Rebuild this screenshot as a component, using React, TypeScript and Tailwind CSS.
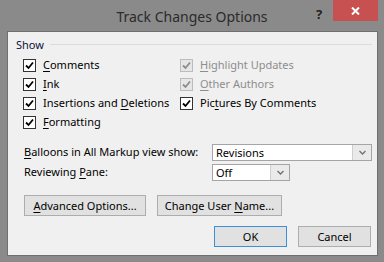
import React from "react";

const font = { fontFamily: '"Noto Sans", "Open Sans", sans-serif' };

function Check({ disabled }: { disabled?: boolean }) {
  return (
    <span
      className={`w-[13px] h-[13px] shrink-0 border flex items-center justify-center ${
        disabled ? "border-[#bcbcbc] bg-[#e6e6e6]" : "border-[#333333] bg-white"
      }`}
    >
      <svg width="9" height="9" viewBox="0 0 9 9">
        <path
          d="M1 4.5 L3.5 7 L8 1.5"
          fill="none"
          stroke={disabled ? "#8c8c8c" : "#000"}
          strokeWidth="1.8"
        />
      </svg>
    </span>
  );
}

// ラベルのアクセスキー部分に下線を引く
function Label({ pre, key_, post, disabled }: { pre?: string; key_: string; post?: string; disabled?: boolean }) {
  return (
    <span className={`whitespace-nowrap ${disabled ? "text-[#8d8d8d]" : "text-black"}`}>
      {pre}
      <u className="underline-offset-2">{key_}</u>
      {post}
    </span>
  );
}

function CheckRow({ children, disabled }: { children: React.ReactNode; disabled?: boolean }) {
  return (
    <div className="h-[19px] flex items-center gap-[7px]">
      <Check disabled={disabled} />
      {children}
    </div>
  );
}

function Select({ value, width }: { value: string; width: string }) {
  return (
    <div className={`${width} h-[17px] border border-[#a5a5a5] bg-white flex`}>
      <div className="flex-1 pl-[3px] leading-[15px] text-black">{value}</div>
      <div className="w-[19px] h-full border-l border-[#cfcfcf] bg-[#eaeaea] flex items-center justify-center">
        <svg width="7" height="5" viewBox="0 0 7 5">
          <path d="M0.5 1 L3.5 4 L6.5 1" fill="none" stroke="#707070" strokeWidth="1.3" />
        </svg>
      </div>
    </div>
  );
}

function Btn({ children, width, focused }: { children: React.ReactNode; width: string; focused?: boolean }) {
  return (
    <button
      className={`${width} h-[21px] border bg-[#e1e1e1] text-black flex items-center justify-center leading-none ${
        focused ? "border-[#3c8fd9]" : "border-[#adadad]"
      }`}
    >
      {children}
    </button>
  );
}

export default function App() {
  return (
    <div className="w-[384px] h-[262px] bg-[#8a8a8a] flex flex-col text-[11px]" style={font}>
      {/* タイトルバー */}
      <div className="h-[31px] relative flex items-center justify-center">
        <span className="text-[14px] text-[#2b2b2b] mt-[1px]">Track Changes Options</span>
        <span className="absolute left-[316px] top-[5px] text-[13px] font-bold text-[#222]">?</span>
        <div className="absolute left-[333px] top-0 w-[45px] h-[21px] bg-[#c75050] flex items-center justify-center">
          <svg width="9" height="8" viewBox="0 0 9 8">
            <path d="M1 0.5 L8 7.5 M8 0.5 L1 7.5" stroke="#fff" strokeWidth="2" />
          </svg>
        </div>
      </div>

      <div className="ml-[7px] mr-[6px] mb-[6px] h-[225px] border border-[#6f6f6f] bg-[#f0f0f0] flex flex-col">
        {/* Show グループ */}
        <div className="mt-[5px] pl-[8px] pr-[5px] flex items-start gap-[6px]">
          <span className="leading-[16px] text-[#10103a]">Show</span>
          <div className="flex-1 mt-[7px] h-px bg-[#dcdcdc]" />
        </div>

        <div className="mt-[3px] pl-[15px] grid grid-cols-[157px_1fr]">
          <div className="flex flex-col">
            <CheckRow>
              <Label key_="C" post="omments" />
            </CheckRow>
            <CheckRow>
              <Label key_="I" post="nk" />
            </CheckRow>
            <CheckRow>
              <Label pre="Insertions and " key_="D" post="eletions" />
            </CheckRow>
            <CheckRow>
              <Label key_="F" post="ormatting" />
            </CheckRow>
          </div>
          <div className="flex flex-col">
            <CheckRow disabled>
              <Label key_="H" post="ighlight Updates" disabled />
            </CheckRow>
            <CheckRow disabled>
              <Label key_="O" post="ther Authors" disabled />
            </CheckRow>
            <CheckRow>
              <Label pre="Pic" key_="t" post="ures By Comments" />
            </CheckRow>
          </div>
        </div>

        {/* ドロップダウン */}
        <div className="mt-[12px] pl-[16px] flex flex-col gap-[3px]">
          <div className="flex items-center">
            <div className="w-[188px]">
              <Label key_="B" post="alloons in All Markup view show:" />
            </div>
            <Select value="Revisions" width="w-[160px]" />
          </div>
          <div className="flex items-center">
            <div className="w-[188px]">
              <Label pre="Reviewing " key_="P" post="ane:" />
            </div>
            <Select value="Off" width="w-[78px]" />
          </div>
        </div>

        <div className="mt-[14px] pl-[16px] flex gap-[11px]">
          <Btn width="w-[122px]">
            <Label key_="A" post="dvanced Options..." />
          </Btn>
          <Btn width="w-[125px]">
            <Label pre="Change User " key_="N" post="ame..." />
          </Btn>
        </div>

        <div className="mt-[10px] pr-[6px] flex justify-end gap-[11px]">
          <Btn width="w-[73px]" focused>
            OK
          </Btn>
          <Btn width="w-[73px]">Cancel</Btn>
        </div>
      </div>
    </div>
  );
}
